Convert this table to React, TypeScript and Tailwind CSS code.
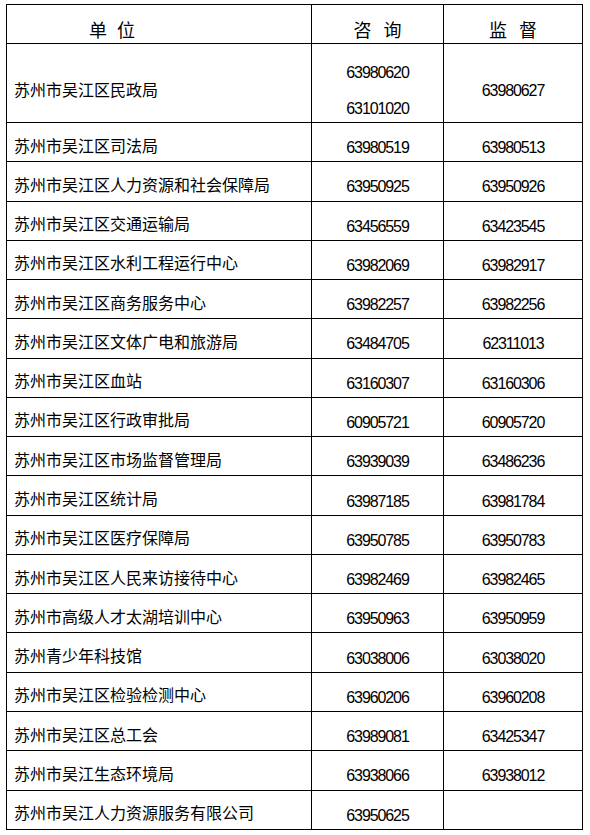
const rows: { name: string; consult: string[]; supervise: string }[] = [
  { name: "苏州市吴江区民政局", consult: ["63980620", "63101020"], supervise: "63980627" },
  { name: "苏州市吴江区司法局", consult: ["63980519"], supervise: "63980513" },
  { name: "苏州市吴江区人力资源和社会保障局", consult: ["63950925"], supervise: "63950926" },
  { name: "苏州市吴江区交通运输局", consult: ["63456559"], supervise: "63423545" },
  { name: "苏州市吴江区水利工程运行中心", consult: ["63982069"], supervise: "63982917" },
  { name: "苏州市吴江区商务服务中心", consult: ["63982257"], supervise: "63982256" },
  { name: "苏州市吴江区文体广电和旅游局", consult: ["63484705"], supervise: "62311013" },
  { name: "苏州市吴江区血站", consult: ["63160307"], supervise: "63160306" },
  { name: "苏州市吴江区行政审批局", consult: ["60905721"], supervise: "60905720" },
  { name: "苏州市吴江区市场监督管理局", consult: ["63939039"], supervise: "63486236" },
  { name: "苏州市吴江区统计局", consult: ["63987185"], supervise: "63981784" },
  { name: "苏州市吴江区医疗保障局", consult: ["63950785"], supervise: "63950783" },
  { name: "苏州市吴江区人民来访接待中心", consult: ["63982469"], supervise: "63982465" },
  { name: "苏州市高级人才太湖培训中心", consult: ["63950963"], supervise: "63950959" },
  { name: "苏州青少年科技馆", consult: ["63038006"], supervise: "63038020" },
  { name: "苏州市吴江区检验检测中心", consult: ["63960206"], supervise: "63960208" },
  { name: "苏州市吴江区总工会", consult: ["63989081"], supervise: "63425347" },
  { name: "苏州市吴江生态环境局", consult: ["63938066"], supervise: "63938012" },
  { name: "苏州市吴江人力资源服务有限公司", consult: ["63950625"], supervise: "" },
];

const cjk = "font-['Noto_Sans_CJK_SC',sans-serif]";
const num = "font-['Liberation_Sans',Arial,sans-serif] text-[16px] tracking-[-1.1px] leading-none";
const head = `flex items-center border-l border-t border-black pt-[10px] text-[18px] font-normal leading-none ${cjk}`;

export default function App() {
  return (
    <div className="min-h-[835px] w-[590px] bg-white text-black">
      <div className="ml-[6px] mt-[4px] flex w-[577px] flex-col border-r border-b border-black">
        {/* header */}
        <div className="flex h-[39px]">
          <div className={`${head} w-[305px] pl-[82px]`}>
            <span className="flex gap-[10px]">
              <span>单</span>
              <span>位</span>
            </span>
          </div>
          <div className={`${head} w-[132px] justify-center`}>
            <span className="flex gap-[12px]">
              <span>咨</span>
              <span>询</span>
            </span>
          </div>
          <div className={`${head} w-[139px] justify-center`}>
            <span className="flex gap-[12px]">
              <span>监</span>
              <span>督</span>
            </span>
          </div>
        </div>

        {rows.map((r, i) => (
          <div key={r.name} className={i === 0 ? "flex h-[79px]" : "flex h-[39.28px]"}>
            <div
              className={`flex w-[305px] items-center border-l border-t border-black pl-[7px] text-[16px] leading-none ${cjk} ${
                i === 0 ? "pt-[11px]" : "pt-[5px]"
              }`}
            >
              {r.name}
            </div>
            <div
              className={`flex w-[132px] flex-col items-center justify-center gap-[20px] border-l border-t border-black ${num} ${
                i === 0 ? "pt-[16px]" : "pt-[12px]"
              }`}
            >
              {r.consult.map((c) => (
                <span key={c}>{c}</span>
              ))}
            </div>
            <div
              className={`flex w-[139px] items-center justify-center border-l border-t border-black ${num} ${
                i === 0 ? "pt-[16px]" : "pt-[12px]"
              }`}
            >
              {r.supervise}
            </div>
          </div>
        ))}
      </div>
    </div>
  );
}
